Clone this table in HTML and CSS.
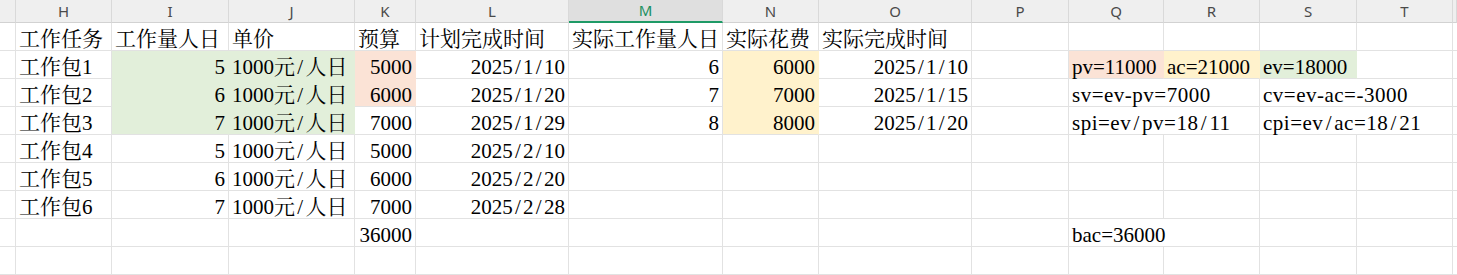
FILE: index.html
```html
<!DOCTYPE html>
<html lang="zh-CN">
<head>
<meta charset="utf-8">
<title>Sheet</title>
<link rel="stylesheet" href="styles.css">
</head>
<body>
<div class="sheet">
  <div class="hd"></div><div class="hd">H</div><div class="hd">I</div><div class="hd">J</div><div class="hd">K</div><div class="hd">L</div><div class="hd sel">M</div><div class="hd">N</div><div class="hd">O</div><div class="hd">P</div><div class="hd">Q</div><div class="hd">R</div><div class="hd">S</div><div class="hd">T</div><div class="hd"></div>

  <div class="c"></div><div class="c">工作任务</div><div class="c">工作量人日</div><div class="c">单价</div><div class="c">预算</div><div class="c">计划完成时间</div><div class="c">实际工作量人日</div><div class="c">实际花费</div><div class="c">实际完成时间</div><div class="c"></div><div class="c"></div><div class="c"></div><div class="c"></div><div class="c"></div><div class="c"></div>

  <div class="c"></div><div class="c">工作包1</div><div class="c r g">5</div><div class="c g">1000元<span class="sl">/</span>人日</div><div class="c r o">5000</div><div class="c r">2025<span class="sl">/</span>1<span class="sl">/</span>10</div><div class="c r">6</div><div class="c r y">6000</div><div class="c r">2025<span class="sl">/</span>1<span class="sl">/</span>10</div><div class="c"></div><div class="c o lb">pv=11000</div><div class="c y lb">ac=21000</div><div class="c g lb">ev=18000</div><div class="c"></div><div class="c"></div>

  <div class="c"></div><div class="c">工作包2</div><div class="c r g">6</div><div class="c g">1000元<span class="sl">/</span>人日</div><div class="c r o lb">6000</div><div class="c r">2025<span class="sl">/</span>1<span class="sl">/</span>20</div><div class="c r">7</div><div class="c r y">7000</div><div class="c r">2025<span class="sl">/</span>1<span class="sl">/</span>15</div><div class="c"></div><div class="c sp2 f">sv=ev-pv=7000</div><div class="c sp2 f">cv=ev-ac=-3000</div><div class="c"></div>

  <div class="c"></div><div class="c">工作包3</div><div class="c r g lb">7</div><div class="c g lb">1000元<span class="sl">/</span>人日</div><div class="c r">7000</div><div class="c r">2025<span class="sl">/</span>1<span class="sl">/</span>29</div><div class="c r">8</div><div class="c r y lb">8000</div><div class="c r">2025<span class="sl">/</span>1<span class="sl">/</span>20</div><div class="c"></div><div class="c sp2 f">spi=ev<span class="sl">/</span>pv=18<span class="sl">/</span>11</div><div class="c sp2 f">cpi=ev<span class="sl">/</span>ac=18<span class="sl">/</span>21</div><div class="c"></div>

  <div class="c"></div><div class="c">工作包4</div><div class="c r">5</div><div class="c">1000元<span class="sl">/</span>人日</div><div class="c r">5000</div><div class="c r">2025<span class="sl">/</span>2<span class="sl">/</span>10</div><div class="c"></div><div class="c"></div><div class="c"></div><div class="c"></div><div class="c"></div><div class="c"></div><div class="c"></div><div class="c"></div><div class="c"></div>

  <div class="c"></div><div class="c">工作包5</div><div class="c r">6</div><div class="c">1000元<span class="sl">/</span>人日</div><div class="c r">6000</div><div class="c r">2025<span class="sl">/</span>2<span class="sl">/</span>20</div><div class="c"></div><div class="c"></div><div class="c"></div><div class="c"></div><div class="c"></div><div class="c"></div><div class="c"></div><div class="c"></div><div class="c"></div>

  <div class="c"></div><div class="c">工作包6</div><div class="c r">7</div><div class="c">1000元<span class="sl">/</span>人日</div><div class="c r">7000</div><div class="c r">2025<span class="sl">/</span>2<span class="sl">/</span>28</div><div class="c"></div><div class="c"></div><div class="c"></div><div class="c"></div><div class="c"></div><div class="c"></div><div class="c"></div><div class="c"></div><div class="c"></div>

  <div class="c"></div><div class="c"></div><div class="c"></div><div class="c"></div><div class="c r">36000</div><div class="c"></div><div class="c"></div><div class="c"></div><div class="c"></div><div class="c"></div><div class="c sp2">bac=36000</div><div class="c"></div><div class="c"></div><div class="c"></div>

  <div class="c"></div><div class="c"></div><div class="c"></div><div class="c"></div><div class="c"></div><div class="c"></div><div class="c"></div><div class="c"></div><div class="c"></div><div class="c"></div><div class="c"></div><div class="c"></div><div class="c"></div><div class="c"></div><div class="c"></div>
</div>
</body>
</html>
```

FILE: styles.css
```css
html, body {
  margin: 0;
  padding: 0;
  background: #ffffff;
}

.sheet {
  display: grid;
  grid-template-columns: 16px 96px 117px 126px 61px 153px 154px 96px 153px 97px 95px 96px 97px 96px 4px;
  grid-template-rows: 23px;
  grid-auto-rows: 28px;
  width: 1457px;
  overflow: hidden;
}

.hd {
  box-sizing: border-box;
  background: #efefef;
  border-right: 1px solid #d9d9d9;
  border-bottom: 1px solid #d2d2d2;
  display: flex;
  align-items: center;
  justify-content: center;
  font-family: "Noto Sans", "Liberation Sans", sans-serif;
  font-size: 15px;
  color: #4a4a4a;
  line-height: 1;
}

.hd.sel {
  background: #dfdfdf;
  color: #1b8f5f;
  border-bottom: 2px solid #1e9a66;
}

.c {
  box-sizing: border-box;
  border-right: 1px solid #e2e2e2;
  border-bottom: 1px solid #e2e2e2;
  display: flex;
  align-items: flex-end;
  justify-content: flex-start;
  padding: 0 3px;
  font-family: "Liberation Serif", "Noto Serif CJK SC", "Noto Sans CJK SC", serif;
  font-size: 21px;
  line-height: 21px;
  color: #000000;
  white-space: nowrap;
  overflow: visible;
}

.c .sl {
  padding: 0 0.11em;
}

.c.f {
  letter-spacing: 0.5px;
}

.c.r {
  justify-content: flex-end;
}

.c.sp2 {
  grid-column: span 2;
}

.c.g {
  background: #e2efda;
  border-color: #e2efda;
}

.c.o {
  background: #fbe3d6;
  border-color: #fbe3d6;
}

.c.y {
  background: #fff2cc;
  border-color: #fff2cc;
}

.c.lb {
  border-bottom-color: #e2e2e2;
}
```
